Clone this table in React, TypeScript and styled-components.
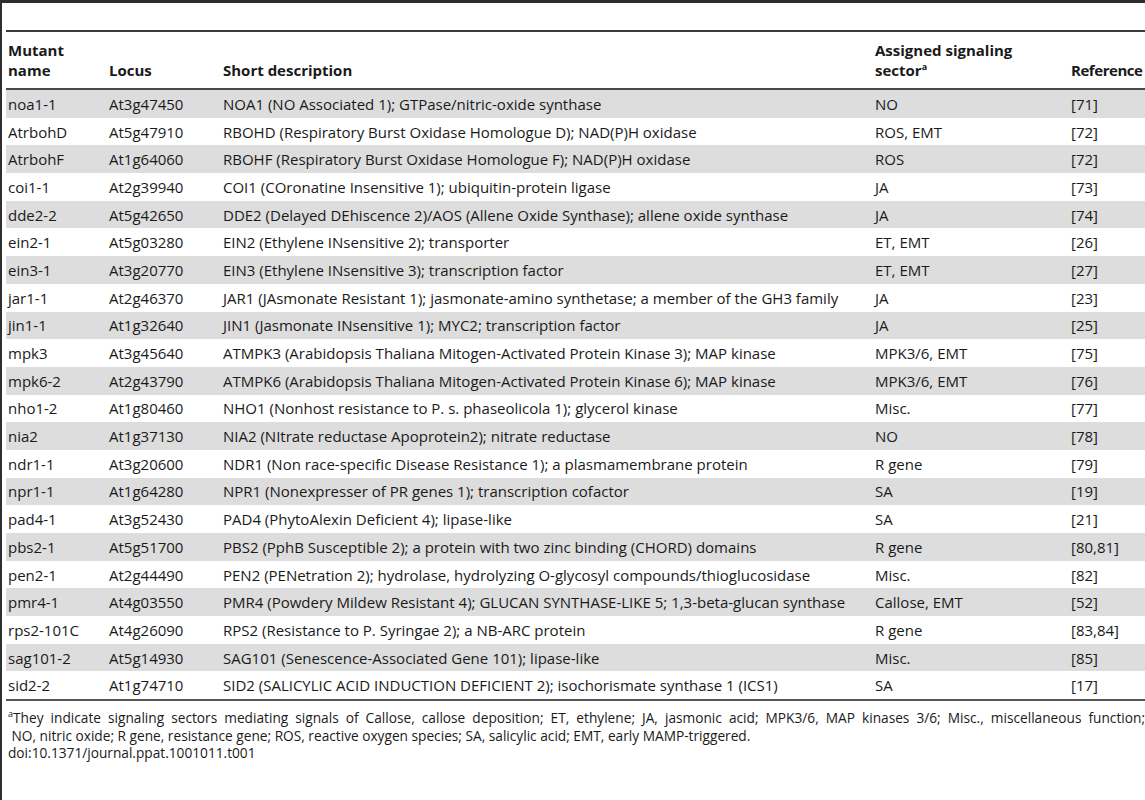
import styled, { createGlobalStyle } from 'styled-components'

const GlobalStyle = createGlobalStyle`
  html, body {
    margin: 0;
    padding: 0;
    background: #fff;
  }
  body {
    font-family: 'Open Sans', 'Liberation Sans', sans-serif;
    color: #1a1a1a;
  }
`

type Row = [string, string, string, string, string]

const rows: Row[] = [
  ['noa1-1', 'At3g47450', 'NOA1 (NO Associated 1); GTPase/nitric-oxide synthase', 'NO', '[71]'],
  ['AtrbohD', 'At5g47910', 'RBOHD (Respiratory Burst Oxidase Homologue D); NAD(P)H oxidase', 'ROS, EMT', '[72]'],
  ['AtrbohF', 'At1g64060', 'RBOHF (Respiratory Burst Oxidase Homologue F); NAD(P)H oxidase', 'ROS', '[72]'],
  ['coi1-1', 'At2g39940', 'COI1 (COronatine Insensitive 1); ubiquitin-protein ligase', 'JA', '[73]'],
  ['dde2-2', 'At5g42650', 'DDE2 (Delayed DEhiscence 2)/AOS (Allene Oxide Synthase); allene oxide synthase', 'JA', '[74]'],
  ['ein2-1', 'At5g03280', 'EIN2 (Ethylene INsensitive 2); transporter', 'ET, EMT', '[26]'],
  ['ein3-1', 'At3g20770', 'EIN3 (Ethylene INsensitive 3); transcription factor', 'ET, EMT', '[27]'],
  ['jar1-1', 'At2g46370', 'JAR1 (JAsmonate Resistant 1); jasmonate-amino synthetase; a member of the GH3 family', 'JA', '[23]'],
  ['jin1-1', 'At1g32640', 'JIN1 (Jasmonate INsensitive 1); MYC2; transcription factor', 'JA', '[25]'],
  ['mpk3', 'At3g45640', 'ATMPK3 (Arabidopsis Thaliana Mitogen-Activated Protein Kinase 3); MAP kinase', 'MPK3/6, EMT', '[75]'],
  ['mpk6-2', 'At2g43790', 'ATMPK6 (Arabidopsis Thaliana Mitogen-Activated Protein Kinase 6); MAP kinase', 'MPK3/6, EMT', '[76]'],
  ['nho1-2', 'At1g80460', 'NHO1 (Nonhost resistance to P. s. phaseolicola 1); glycerol kinase', 'Misc.', '[77]'],
  ['nia2', 'At1g37130', 'NIA2 (NItrate reductase Apoprotein2); nitrate reductase', 'NO', '[78]'],
  ['ndr1-1', 'At3g20600', 'NDR1 (Non race-specific Disease Resistance 1); a plasmamembrane protein', 'R gene', '[79]'],
  ['npr1-1', 'At1g64280', 'NPR1 (Nonexpresser of PR genes 1); transcription cofactor', 'SA', '[19]'],
  ['pad4-1', 'At3g52430', 'PAD4 (PhytoAlexin Deficient 4); lipase-like', 'SA', '[21]'],
  ['pbs2-1', 'At5g51700', 'PBS2 (PphB Susceptible 2); a protein with two zinc binding (CHORD) domains', 'R gene', '[80,81]'],
  ['pen2-1', 'At2g44490', 'PEN2 (PENetration 2); hydrolase, hydrolyzing O-glycosyl compounds/thioglucosidase', 'Misc.', '[82]'],
  ['pmr4-1', 'At4g03550', 'PMR4 (Powdery Mildew Resistant 4); GLUCAN SYNTHASE-LIKE 5; 1,3-beta-glucan synthase', 'Callose, EMT', '[52]'],
  ['rps2-101C', 'At4g26090', 'RPS2 (Resistance to P. Syringae 2); a NB-ARC protein', 'R gene', '[83,84]'],
  ['sag101-2', 'At5g14930', 'SAG101 (Senescence-Associated Gene 101); lipase-like', 'Misc.', '[85]'],
  ['sid2-2', 'At1g74710', 'SID2 (SALICYLIC ACID INDUCTION DEFICIENT 2); isochorismate synthase 1 (ICS1)', 'SA', '[17]'],
]

const COLUMNS = '101px 114px 652px 196px 1fr'

const Page = styled.div`
  width: 1145px;
  height: 800px;
  box-sizing: border-box;
  overflow: hidden;
  border-top: 3px solid #2e2e2e;
  border-left: 2px solid #2e2e2e;
  padding-left: 4px;
`

const CaptionGap = styled.div`
  height: 27px;
  border-bottom: 2px solid #3a3a3a;
`

const HeadRow = styled.div`
  display: grid;
  grid-template-columns: ${COLUMNS};
  align-items: end;
  height: 58px;
  box-sizing: border-box;
  padding-bottom: 8px;
  border-bottom: 2px solid #4a4a4a;
  font-size: 15px;
  font-weight: 700;
  line-height: 20px;
`

const HeadCell = styled.div<{ $tight?: boolean }>`
  padding: 0 2px;
  white-space: nowrap;
  letter-spacing: ${(p) => (p.$tight ? '-0.45px' : 'normal')};
`

const Sup = styled.sup`
  font-size: 9px;
  line-height: 0;
  vertical-align: 6px;
`

const BodyRow = styled.div<{ $shade: boolean }>`
  display: grid;
  grid-template-columns: ${COLUMNS};
  align-items: center;
  height: 27.7px;
  font-size: 15px;
  line-height: 20px;
  background: ${(p) => (p.$shade ? '#dddddd' : '#ffffff')};
`

const Cell = styled.div`
  padding: 0 2px;
  white-space: nowrap;
`

const TableFoot = styled.div`
  border-top: 2px solid #555;
  padding: 8px 0 0 2px;
  font-size: 13.7px;
  line-height: 17.5px;
`

const FootLine = styled.div<{ $justify?: boolean }>`
  white-space: ${(p) => (p.$justify ? 'normal' : 'pre')};
  text-align: ${(p) => (p.$justify ? 'justify' : 'left')};
  text-align-last: ${(p) => (p.$justify ? 'justify' : 'auto')};
`

function App() {
  return (
    <>
      <GlobalStyle />
      <Page>
        <CaptionGap />
        <HeadRow>
          <HeadCell>
            Mutant
            <br />
            name
          </HeadCell>
          <HeadCell>Locus</HeadCell>
          <HeadCell>Short description</HeadCell>
          <HeadCell>
            Assigned signaling
            <br />
            sector<Sup>a</Sup>
          </HeadCell>
          <HeadCell $tight>Reference</HeadCell>
        </HeadRow>
        {rows.map((r, i) => (
          <BodyRow key={r[0]} $shade={i % 2 === 0}>
            {r.map((c, j) => (
              <Cell key={j}>{c}</Cell>
            ))}
          </BodyRow>
        ))}
        <TableFoot>
          <FootLine $justify>
            <Sup>a</Sup>They indicate signaling sectors mediating signals of Callose, callose deposition; ET, ethylene; JA,
            jasmonic acid; MPK3/6, MAP kinases 3/6; Misc., miscellaneous function;
          </FootLine>
          <FootLine> NO, nitric oxide; R gene, resistance gene; ROS, reactive oxygen species; SA, salicylic acid; EMT, early MAMP-triggered.</FootLine>
          <FootLine>doi:10.1371/journal.ppat.1001011.t001</FootLine>
        </TableFoot>
      </Page>
    </>
  )
}

export default App
